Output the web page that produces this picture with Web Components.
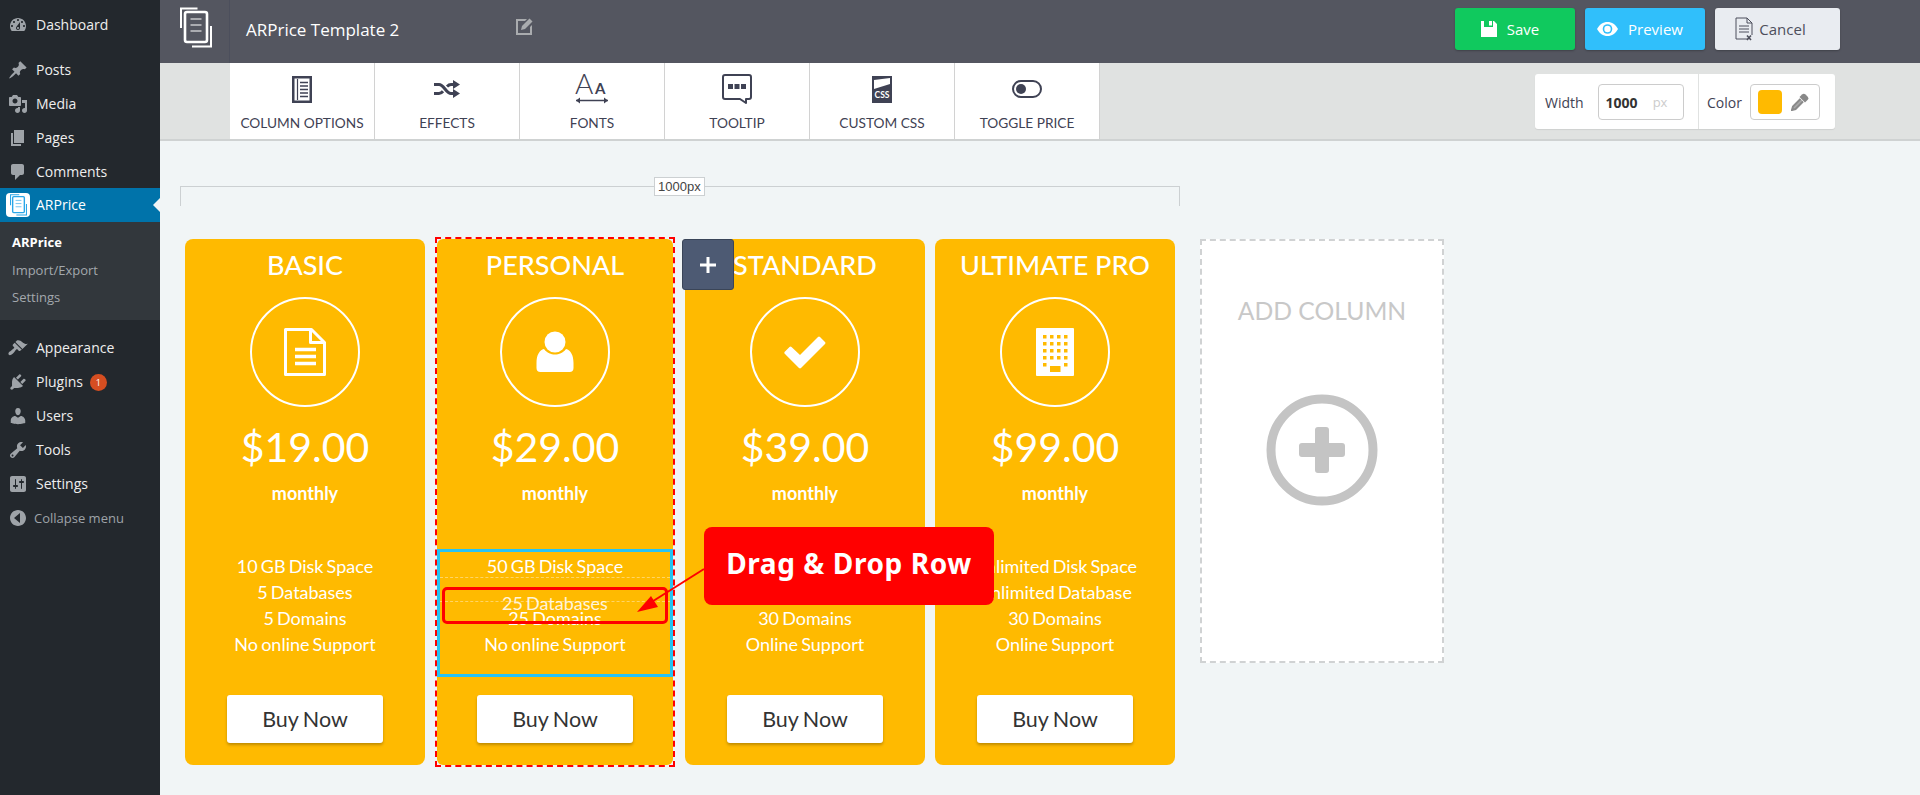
<!DOCTYPE html>
<html lang="en">
<head>
<meta charset="utf-8">
<title>ARPrice Template 2</title>
<style>
  html, body { margin: 0; padding: 0; height: 795px; overflow: hidden; background: #f1f5f6; }
  body { font-family: "Open Sans", "Noto Sans", sans-serif; }
  svg { display: block; }
</style>
</head>
<body>
<app-shell>
  <wp-sidebar slot="side">
    <wp-item icon="dashboard">Dashboard</wp-item>
    <wp-item icon="post" gap="top">Posts</wp-item>
    <wp-item icon="media">Media</wp-item>
    <wp-item icon="page">Pages</wp-item>
    <wp-item icon="comment">Comments</wp-item>
    <wp-item icon="arprice" current>ARPrice</wp-item>
    <wp-submenu>
      <wp-subitem current>ARPrice</wp-subitem>
      <wp-subitem>Import/Export</wp-subitem>
      <wp-subitem>Settings</wp-subitem>
    </wp-submenu>
    <wp-item icon="appearance" gap="sep">Appearance</wp-item>
    <wp-item icon="plugin" badge="1">Plugins</wp-item>
    <wp-item icon="user">Users</wp-item>
    <wp-item icon="tool">Tools</wp-item>
    <wp-item icon="settings">Settings</wp-item>
    <wp-item icon="collapse" dim>Collapse menu</wp-item>
  </wp-sidebar>

  <editor-header slot="top" heading="ARPrice Template 2"></editor-header>

  <editor-toolbar slot="top">
    <tool-tab label="COLUMN OPTIONS">
      <svg width="20" height="27" viewBox="0 0 20 27" fill="none" stroke="#3f4254"><rect x="1.250" y="1.250" width="17.500" height="24.500" stroke-width="2.500"/><path d="M5.500 3v21" stroke-width="1.200"/><path d="M8 6.500h8M8 10h8M8 13.500h8M8 17h8M8 20.500h8" stroke-width="1.500"/></svg>
    </tool-tab>
    <tool-tab label="EFFECTS">
      <svg width="26" height="18" viewBox="0 0 26 18" fill="none" stroke="#3f4254" stroke-width="3"><path d="M0 4.500h5c5 0 7 9 12 9h3M0 13.500h5c1.800 0 3-1 4-2.200M13 6.500c1-1 2.200-2 4-2h3"/><path d="M19 0l7 4.500-7 4.500zM19 9l7 4.500-7 4.500z" fill="#3f4254" stroke="none"/></svg>
    </tool-tab>
    <tool-tab label="FONTS">
      <svg width="34" height="31" viewBox="0 0 34 31" style="overflow:visible"><text x="0" y="20" font-family="Lato" font-size="28" font-weight="300" fill="#3f4254">A</text><text x="20" y="20" font-family="Lato" font-size="15" font-weight="700" fill="#3f4254">A</text><path d="M1 26.500h32" stroke="#3f4254" stroke-width="1.500"/><path d="M1 26.500l4-3v6zM33 26.500l-4-3v6z" fill="#3f4254"/></svg>
    </tool-tab>
    <tool-tab label="TOOLTIP">
      <svg width="30" height="30" viewBox="0 0 30 30" fill="none"><path d="M3 1h24a2 2 0 0 1 2 2v20a2 2 0 0 1-2 2h-3v4l-6-4H3a2 2 0 0 1-2-2V3a2 2 0 0 1 2-2z" stroke="#3f4254" stroke-width="2" stroke-linejoin="round"/><path d="M6 10h5v5H6zM12.500 10h5v5h-5zM19 10h5v5h-5z" fill="#3f4254"/></svg>
    </tool-tab>
    <tool-tab label="CUSTOM CSS">
      <svg width="20" height="27" viewBox="0 0 20 27" style="overflow:visible"><rect width="20" height="27" fill="#3f4254"/><path d="M2 13V4l16-2v6z" fill="#fff"/><text x="10" y="21.500" text-anchor="middle" font-family="Lato" font-size="8.500" font-weight="700" fill="#fff">CSS</text></svg>
    </tool-tab>
    <tool-tab label="TOGGLE PRICE">
      <svg width="30" height="18" viewBox="0 0 30 18" fill="none"><rect x="1" y="1" width="28" height="16" rx="8" stroke="#3f4254" stroke-width="2"/><circle cx="9" cy="9" r="5" fill="#3f4254"/></svg>
    </tool-tab>
    <size-panel slot="end"></size-panel>
  </editor-toolbar>

  <editor-canvas slot="main">
    <width-ruler label="1000px"></width-ruler>
    <card-row>
      <price-card name="BASIC" price="$19.00">
        <svg slot="icon" width="42" height="48" viewBox="0 0 42 48" fill="none" stroke="#fff" stroke-width="3" stroke-linejoin="round"><path d="M1.500 1.500h26l13 13v32h-39z"/><path d="M26.500 1.500v13h14"/><path d="M11 21.500h21M11 28.500h21M11 35.500h21" stroke-width="3.500"/></svg>
        <feature-row>10 GB Disk Space</feature-row>
        <feature-row>5 Databases</feature-row>
        <feature-row>5 Domains</feature-row>
        <feature-row>No online Support</feature-row>
      </price-card>
      <price-card name="PERSONAL" price="$29.00" selected>
        <svg slot="icon" width="38" height="42" viewBox="0 0 38 42" fill="#fff"><circle cx="19" cy="11" r="10.500"/><path d="M8 18c3 4 7 5.500 11 5.500S27 22 30 18c4.500 1 7.500 6 7.500 14v5a4 4 0 0 1-4 4h-29a4 4 0 0 1-4-4v-5C.5 24 3.500 19 8 18z"/></svg>
        <feature-row>50 GB Disk Space</feature-row>
        <feature-row placeholder>25 Databases</feature-row>
        <feature-row>25 Domains</feature-row>
        <feature-row>No online Support</feature-row>
      </price-card>
      <price-card name="STANDARD" price="$39.00">
        <svg slot="icon" width="42" height="33" viewBox="0 0 42 33" fill="#fff"><path d="M1 15.500l4.500-4.500a1.500 1.500 0 0 1 2 0l8.500 8L34 1a1.500 1.500 0 0 1 2 0l5 5a1.500 1.500 0 0 1 0 2L17 32a1.500 1.500 0 0 1-2 0L1 18a1.500 1.500 0 0 1 0-2.500z"/></svg>
        <feature-row></feature-row>
        <feature-row></feature-row>
        <feature-row>30 Domains</feature-row>
        <feature-row>Online Support</feature-row>
      </price-card>
      <price-card name="ULTIMATE PRO" price="$99.00">
        <svg slot="icon" width="38" height="48" viewBox="0 0 38 48"><rect width="38" height="48" rx="1" fill="#fff"/><g fill="#ffba00"><path d="M7 7h3.500v3.500H7zM14 7h3.500v3.500H14zM21 7h3.500v3.500H21zM28 7h3.500v3.500H28zM7 14h3.500v3.500H7zM14 14h3.500v3.500H14zM21 14h3.500v3.500H21zM28 14h3.500v3.500H28zM7 21h3.500v3.500H7zM14 21h3.500v3.500H14zM21 21h3.500v3.500H21zM28 21h3.500v3.500H28zM7 28h3.500v3.500H7zM14 28h3.500v3.500H14zM21 28h3.500v3.500H21zM28 28h3.500v3.500H28zM7 35h3.500v3.500H7zM28 35h3.500v3.500H28zM14 38h10.500v6H14z"/></g></svg>
        <feature-row>Unlimited Disk Space</feature-row>
        <feature-row>Unlimited Database</feature-row>
        <feature-row>30 Domains</feature-row>
        <feature-row>Online Support</feature-row>
      </price-card>
      <add-column></add-column>
    </card-row>
    <add-row-button></add-row-button>
    <drag-callout>Drag &amp; Drop Row</drag-callout>
  </editor-canvas>
</app-shell>

<script>
const ICONS = {
  dashboard: "M3.76 16h12.48c1.1-1.37 1.76-3.11 1.76-5 0-4.42-3.58-8-8-8s-8 3.58-8 8c0 1.89.66 3.63 1.76 5zM10 4c.55 0 1 .45 1 1s-.45 1-1 1-1-.45-1-1 .45-1 1-1zM6 6c.55 0 1 .45 1 1s-.45 1-1 1-1-.45-1-1 .45-1 1-1zm8 0c.55 0 1 .45 1 1s-.45 1-1 1-1-.45-1-1 .45-1 1-1zm-5.37 5.55L12 7v6c0 1.1-.9 2-2 2s-2-.9-2-2c0-.57.24-1.08.63-1.45zM4 10c.55 0 1 .45 1 1s-.45 1-1 1-1-.45-1-1 .45-1 1-1zm12 0c.55 0 1 .45 1 1s-.45 1-1 1-1-.45-1-1 .45-1 1-1zm-5 3c0-.55-.45-1-1-1s-1 .45-1 1 .45 1 1 1 1-.45 1-1z",
  post: "M10.44 3.02l1.82-1.82 6.36 6.35-1.83 1.82c-1.05-.68-2.48-.57-3.41.36l-.75.75c-.92.93-1.04 2.35-.35 3.41l-1.83 1.82-2.41-2.41-2.8 2.79c-.42.42-3.38 2.71-3.8 2.29s1.86-3.39 2.28-3.81l2.79-2.79L4.1 9.36l1.83-1.82c1.05.69 2.48.57 3.4-.36l.75-.75c.93-.92 1.05-2.35.36-3.41z",
  media: "M13 11V4c0-.55-.45-1-1-1h-1.67L9 1H5L3.67 3H2c-.55 0-1 .45-1 1v7c0 .55.45 1 1 1h10c.55 0 1-.45 1-1zM7 4.5c1.38 0 2.5 1.12 2.5 2.5S8.38 9.5 7 9.5 4.5 8.38 4.5 7 5.62 4.5 7 4.5zM14 6h5v10.5c0 1.38-1.12 2.5-2.5 2.5S14 17.88 14 16.5s1.12-2.5 2.5-2.5c.17 0 .34.02.5.05V9h-3V6zm-4 8.05V13h2v3.5c0 1.38-1.12 2.5-2.5 2.5S7 17.88 7 16.5 8.12 14 9.5 14c.17 0 .34.02.5.05z",
  page: "M6 15V2h10v13H6zm-1 1h8v2H3V5h2v11z",
  comment: "M5 2h9c1.1 0 2 .9 2 2v7c0 1.1-.9 2-2 2h-2l-5 5v-5H5c-1.1 0-2-.9-2-2V4c0-1.1.9-2 2-2z",
  appearance: "M14.48 11.06L7.41 3.99l1.5-1.5c.5-.56 2.3-.47 3.51.32 1.21.8 1.43 1.28 2.91 2.1 1.18.64 2.45 1.26 4.45.85zm-.71.71L6.7 4.7 4.93 6.47c-.39.39-.39 1.02 0 1.41l1.06 1.06c.39.39.39 1.03 0 1.42-.6.6-1.43 1.11-2.21 1.69-.35.26-.7.53-1.01.84C1.43 13.23.4 14.57.4 15.8c0 .29.15.63.44.93.29.3.63.44.93.44 1.22 0 2.57-1.03 3.91-2.36.31-.31.58-.66.84-1.01.57-.78 1.08-1.61 1.69-2.21.39-.39 1.02-.39 1.41 0l1.06 1.06c.39.39 1.02.39 1.41 0z",
  plugin: "M13.11 4.36L9.87 7.6 8 5.73l3.24-3.24c.35-.34 1.05-.2 1.56.32.52.51.66 1.21.31 1.55zm-8 1.77l.91-1.12 9.01 9.01-1.19.84c-.71.71-2.63 1.16-3.82 1.16H6.14L4.9 17.26c-.59.59-1.54.59-2.12 0-.59-.58-.59-1.53 0-2.12l1.24-1.24v-3.88c0-1.13.4-3.19 1.09-3.89zm7.26 3.97l3.24-3.24c.34-.35 1.04-.21 1.55.31.52.51.66 1.21.31 1.55l-3.24 3.25z",
  user: "M10 9.25c-2.27 0-2.73-3.44-2.73-3.44C7 4.02 7.82 2 9.97 2c2.16 0 2.98 2.02 2.71 3.81 0 0-.41 3.44-2.68 3.44zm0 2.57L12.72 10c2.39 0 4.52 2.33 4.52 4.53v2.49s-3.65 1.13-7.24 1.13c-3.65 0-7.24-1.13-7.24-1.13v-2.49c0-2.25 1.94-4.48 4.47-4.48z",
  tool: "M16.68 9.77c-1.34 1.34-3.3 1.67-4.95.99l-5.41 6.52c-.99.99-2.59.99-3.58 0s-.99-2.59 0-3.57l6.52-5.42c-.68-1.65-.35-3.61.99-4.95 1.28-1.28 3.12-1.62 4.72-1.06l-2.89 2.89 2.82 2.82 2.86-2.87c.53 1.58.18 3.39-1.08 4.65zM3.81 16.21c.4.39 1.04.39 1.43 0 .4-.4.4-1.04 0-1.43-.39-.4-1.03-.4-1.43 0-.39.39-.39 1.03 0 1.43z",
  settings: "M18 16V4c0-1.1-.9-2-2-2H4c-1.1 0-2 .9-2 2v12c0 1.1.9 2 2 2h12c1.1 0 2-.9 2-2zM8 11h1c.55 0 1 .45 1 1s-.45 1-1 1H8v1.5c0 .28-.22.5-.5.5s-.5-.22-.5-.5V13H6c-.55 0-1-.45-1-1s.45-1 1-1h1V5.5c0-.28.22-.5.5-.5s.5.22.5.5V11zm5-2h-1c-.55 0-1-.45-1-1s.45-1 1-1h1V5.5c0-.28.22-.5.5-.5s.5.22.5.5V7h1c.55 0 1 .45 1 1s-.45 1-1 1h-1v5.5c0 .28-.22.5-.5.5s-.5-.22-.5-.5V9z",
  collapse: "M18 10c0-4.42-3.58-8-8-8s-8 3.58-8 8 3.58 8 8 8 8-3.58 8-8zm-6 5l-6-5 6-5v10z"
};

// stacked document logo, used big in the header and small in the menu
function logoSvg(size, color) {
  return `<svg width="${size}" height="${size * 41 / 32}" viewBox="0 0 32 41" fill="none" stroke="${color}" stroke-width="2">
    <rect x="5" y="5" width="22" height="30" rx="2" stroke-width="2.600"/>
    <path d="M1 21V1.500h16.500M31 19v20.500H12"/>
    <path d="M10.500 12h11M10.500 18h11M10.500 24h11" stroke-width="1.200"/>
  </svg>`;
}

class AppShell extends HTMLElement {
  constructor() {
    super();
    this.attachShadow({ mode: "open" });
    this.shadowRoot.innerHTML = `
      <style>
        :host { display: grid; grid-template-columns: 160px 1fr; grid-template-rows: auto 1fr; height: 795px; overflow: hidden; }
        .side { grid-row: 1 / 3; display: block; }
        .top { display: block; }
      </style>
      <div class="side"><slot name="side"></slot></div>
      <div class="top"><slot name="top"></slot></div>
      <div><slot name="main"></slot></div>`;
  }
}
customElements.define("app-shell", AppShell);

class WpSidebar extends HTMLElement {
  constructor() {
    super();
    this.attachShadow({ mode: "open" });
    this.shadowRoot.innerHTML = `
      <style>
        :host { display: block; box-sizing: border-box; height: 795px; padding-top: 8px; background: #23282d; font: 13px/18px "Open Sans", sans-serif; }
      </style>
      <slot></slot>`;
  }
}
customElements.define("wp-sidebar", WpSidebar);

class WpItem extends HTMLElement {
  constructor() {
    super();
    this.attachShadow({ mode: "open" });
  }
  connectedCallback() {
    const name = this.getAttribute("icon");
    const badge = this.getAttribute("badge");
    const icon = name === "arprice"
      ? `<span class="logo">${logoSvg(17, "#2aa6e8")}</span>`
      : `<svg width="20" height="20" viewBox="0 0 20 20" fill="#9ea3a8"><path d="${ICONS[name]}"/></svg>`;
    this.shadowRoot.innerHTML = `
      <style>
        :host { display: flex; align-items: center; height: 34px; padding-left: 8px; color: #eee; font-size: 14px; }
        :host([gap="top"]) { margin-top: 11px; }
        :host([gap="sep"]) { margin-top: 11px; }
        :host([current]) { background: #0073aa; color: #fff; position: relative; margin-top: -1px; padding-left: 6px; }
        :host([current])::after { content: ""; position: absolute; right: 0; top: 10px; border: 7px solid transparent; border-right-color: #f1f5f6; border-left-width: 0; }
        :host([dim]) { color: #9ea3a8; font-size: 13px; }
        .label { margin-left: 8px; }
        :host([current]) .label { margin-left: 6px; }
        :host([dim]) .label { margin-left: 6px; }
        .logo { width: 24px; height: 24px; background: #fff; border-radius: 4px; display: flex; align-items: center; justify-content: center; }
        .badge { margin-left: 7px; width: 17px; height: 17px; border-radius: 50%; background: #d54e21; color: #fff; font-size: 9px; line-height: 17px; text-align: center; }
      </style>
      ${icon}<span class="label"><slot></slot></span>${badge ? `<span class="badge">${badge}</span>` : ""}`;
  }
}
customElements.define("wp-item", WpItem);

class WpSubmenu extends HTMLElement {
  constructor() {
    super();
    this.attachShadow({ mode: "open" });
    this.shadowRoot.innerHTML = `
      <style>
        :host { display: block; background: #32373c; padding: 7px 0 8px; height: 83px; }
      </style>
      <slot></slot>`;
  }
}
customElements.define("wp-submenu", WpSubmenu);

class WpSubitem extends HTMLElement {
  constructor() {
    super();
    this.attachShadow({ mode: "open" });
    this.shadowRoot.innerHTML = `
      <style>
        :host { display: block; height: 27.500px; line-height: 27px; padding-left: 12px; font-size: 13px; color: #a3a8ad; }
        :host([current]) { color: #fff; font-weight: 700; }
      </style>
      <slot></slot>`;
  }
}
customElements.define("wp-subitem", WpSubitem);

class EditorHeader extends HTMLElement {
  constructor() {
    super();
    this.attachShadow({ mode: "open" });
  }
  static get observedAttributes() {
    return ["heading"];
  }
  attributeChangedCallback(attr, oldVal, newVal) {
    if (attr === "heading") {
      this.heading = newVal;
    }
  }
  connectedCallback() {
    this.shadowRoot.innerHTML = `
      <style>
        :host { display: flex; align-items: center; height: 63px; background: #545660; color: #fff; }
        .logo { width: 70px; height: 63px; box-sizing: border-box; padding: 7px 0 0 20px; border-right: 1px solid #4c4f5c; }
        h1 { margin: 0 0 4px 16px; width: 268px; font: 400 17px "Open Sans", sans-serif; white-space: nowrap; }
        .edit { margin-bottom: 10px; }
        .actions { margin: 0 80px 5px auto; display: flex; gap: 10px; }
        a { display: flex; align-items: center; justify-content: center; gap: 10px; width: 120px; height: 42px; box-sizing: border-box; padding-right: 10px; border-radius: 3px; font-size: 15px; color: #fff; box-shadow: 0 1px 2px rgba(0,0,0,.25); }
        .save { background: #10c95e; }
        .preview { background: #30bffb; }
        .cancel { background: #e9ecf1; color: #4d4f5c; width: 125px; gap: 6px; padding-right: 14px; }
      </style>
      <div class="logo">${logoSvg(32, "#fff")}</div>
      <h1>${this.heading}</h1>
      <svg class="edit" width="20" height="20" viewBox="0 0 20 20" fill="#a9abae"><path d="M2 2h11l-2 2H4v12h12V10l2-2v10H2z"/><path d="M8 9l7.500-7.500 3 3L11 12l-4 1z"/></svg>
      <div class="actions">
        <a class="save"><svg width="16" height="18" viewBox="0 0 16 18" fill="#fff"><path d="M0 1h3v6h9V1h1l3 3v13H0z"/><path d="M8 1h3v4.500H8z"/></svg>Save</a>
        <a class="preview"><svg width="21" height="14" viewBox="0 0 21 14"><path d="M0 7c2.500-4.500 6-7 10.500-7S18.500 2.500 21 7c-2.500 4.500-6 7-10.500 7S2.500 11.500 0 7z" fill="#fff"/><circle cx="10.500" cy="7" r="4.800" fill="#30bffb"/><circle cx="10.500" cy="7" r="3.200" fill="#fff"/></svg>Preview</a>
        <a class="cancel"><svg width="18" height="24" viewBox="0 0 18 24" fill="none" stroke="#4d4f5c"><path d="M13 22H1V1h11l5 5v12M12 1v5h5" stroke-width="1"/><path d="M4 9h10M4 12h10M4 15h10" stroke-width="1"/><path d="M12 18.500l4 4.500M16 18.500l-4 4.500" stroke-width="1.600"/></svg>Cancel</a>
      </div>`;
  }
}
customElements.define("editor-header", EditorHeader);

class EditorToolbar extends HTMLElement {
  constructor() {
    super();
    this.attachShadow({ mode: "open" });
    this.shadowRoot.innerHTML = `
      <style>
        :host { display: flex; height: 76px; padding-left: 70px; background: #e0e2e1; border-bottom: 2px solid #cfd2d2; }
        .tabs { display: flex; }
        .end { margin-left: 435px; }
      </style>
      <div class="tabs"><slot></slot></div>
      <div class="end"><slot name="end"></slot></div>`;
  }
}
customElements.define("editor-toolbar", EditorToolbar);

class ToolTab extends HTMLElement {
  constructor() {
    super();
    this.attachShadow({ mode: "open" });
  }
  connectedCallback() {
    this.shadowRoot.innerHTML = `
      <style>
        :host { display: block; width: 145px; height: 76px; box-sizing: border-box; background: #fff; border-right: 1px solid #d2d2d2; color: #3f4254; font: 13.700px "Lato", sans-serif; }
        .icon { height: 50px; display: flex; align-items: center; justify-content: center; padding-top: 2px; box-sizing: border-box; }
        .text { text-align: center; line-height: 20px; }
      </style>
      <div class="icon"><slot></slot></div>
      <div class="text">${this.getAttribute("label")}</div>`;
  }
}
customElements.define("tool-tab", ToolTab);

class SizePanel extends HTMLElement {
  constructor() {
    super();
    this.attachShadow({ mode: "open" });
    this.shadowRoot.innerHTML = `
      <style>
        :host { display: flex; margin-top: 11px; width: 300px; height: 55px; background: #fff; border-radius: 3px; box-shadow: 0 1px 1px rgba(0,0,0,.08); font: 14px "Open Sans", sans-serif; color: #3f4254; }
        .part { display: flex; align-items: center; box-sizing: border-box; padding-top: 2px; }
        .width { width: 164px; padding-left: 10px; border-right: 1px solid #e0e2e1; }
        .color { padding-left: 8px; }
        .field { display: flex; align-items: center; box-sizing: border-box; height: 36px; margin-top: -1px; border: 1px solid #ccc; border-radius: 4px; }
        .num { width: 86px; margin-left: 14px; padding-left: 7px; gap: 15px; }
        .num b { color: #333; font-size: 14px; }
        .num span { color: #ccc; font-size: 13px; }
        .pick { width: 70px; margin-left: 8px; padding-left: 7px; gap: 9px; }
        .swatch { width: 24px; height: 24px; border-radius: 4px; background: #ffba00; }
      </style>
      <div class="part width">Width<div class="field num"><b>1000</b><span>px</span></div></div>
      <div class="part color">Color<div class="field pick"><div class="swatch"></div>
        <svg width="18" height="18" viewBox="0 0 18 18"><path d="M11 1.500a2.500 2.500 0 0 1 3.500 0l2 2a2.500 2.500 0 0 1 0 3.500L14 9.500 8.500 4z" fill="#888"/><path d="M9.500 6L2 13.500 1 17l3.500-1L12 8.500" fill="#aaa" stroke="#8a8a8a" stroke-width="2"/></svg>
      </div></div>`;
  }
}
customElements.define("size-panel", SizePanel);

class EditorCanvas extends HTMLElement {
  constructor() {
    super();
    this.attachShadow({ mode: "open" });
    this.shadowRoot.innerHTML = `
      <style>
        :host { display: block; position: relative; padding: 45px 0 0 20px; background: #f1f5f6; height: 654px; box-sizing: border-box; }
      </style>
      <slot></slot>`;
  }
}
customElements.define("editor-canvas", EditorCanvas);

class WidthRuler extends HTMLElement {
  constructor() {
    super();
    this.attachShadow({ mode: "open" });
  }
  connectedCallback() {
    this.shadowRoot.innerHTML = `
      <style>
        :host { display: block; position: relative; width: 1000px; height: 20px; box-sizing: border-box; border: 1px solid #ccd0d2; border-bottom: 0; }
        span { position: absolute; left: 473px; top: -10px; height: 19px; padding: 0 3px; box-sizing: border-box; background: #fff; border: 1px solid #ccd0d2; font: 13px/17px "Liberation Sans", sans-serif; color: #444; }
      </style>
      <span>${this.getAttribute("label")}</span>`;
  }
}
customElements.define("width-ruler", WidthRuler);

class CardRow extends HTMLElement {
  constructor() {
    super();
    this.attachShadow({ mode: "open" });
    this.shadowRoot.innerHTML = `
      <style>
        :host { display: flex; align-items: flex-start; gap: 10px; margin: 33px 0 0 5px; }
      </style>
      <slot></slot>`;
  }
}
customElements.define("card-row", CardRow);

class PriceCard extends HTMLElement {
  constructor() {
    super();
    this.attachShadow({ mode: "open" });
  }
  connectedCallback() {
    this.shadowRoot.innerHTML = `
      <style>
        :host { display: block; position: relative; width: 240px; height: 526px; background: #ffba00; border-radius: 8px; color: #fff; text-align: center; font-family: "Lato", sans-serif; }
        :host([selected]) { width: 236px; margin: 0 2px; border-radius: 6px; }
        :host([selected])::after { content: ""; position: absolute; inset: -2px -2px -2px -2px; border: 2px dashed #f00; pointer-events: none; }
        h2 { margin: 0; font-size: 27px; font-weight: 500; line-height: 52px; white-space: nowrap; }
        .circle { width: 110px; height: 110px; box-sizing: border-box; margin: 6px auto 0; border: 2px solid #fff; border-radius: 50%; display: flex; align-items: center; justify-content: center; }
        .price { margin-top: 10px; font-size: 41px; line-height: 60px; }
        .period { margin-top: 4px; font-size: 18px; font-weight: 700; line-height: 24px; }
        .rows { box-sizing: border-box; height: 128px; margin-top: 44px; padding-top: 4px; }
        :host([selected]) .rows { outline: 3px solid #27c3f3; outline-offset: -3px; }
        .buy { width: 156px; height: 48px; margin: 18px auto 0; background: #fff; color: #333; border-radius: 3px; font-size: 21.500px; word-spacing: -1px; line-height: 48px; box-shadow: 0 2px 3px rgba(0,0,0,.25); }
      </style>
      <h2>${this.getAttribute("name")}</h2>
      <div class="circle"><slot name="icon"></slot></div>
      <div class="price">${this.getAttribute("price")}</div>
      <div class="period">monthly</div>
      <div class="rows"><slot></slot></div>
      <div class="buy">Buy Now</div>`;
  }
}
customElements.define("price-card", PriceCard);

class FeatureRow extends HTMLElement {
  constructor() {
    super();
    this.attachShadow({ mode: "open" });
    this.shadowRoot.innerHTML = `
      <style>
        :host { display: block; height: 26px; line-height: 26px; font-size: 18px; word-spacing: -1.500px; white-space: nowrap; }
        :host([placeholder]) { height: 25px; box-sizing: border-box; margin: -2px 3px 3px; border: 1px dashed rgba(255,255,255,.4); border-width: 1px 0; line-height: 23px; }
        :host([placeholder]) span { position: relative; top: 14px; opacity: .85; }
      </style>
      <span><slot></slot></span>`;
  }
}
customElements.define("feature-row", FeatureRow);

class AddColumn extends HTMLElement {
  constructor() {
    super();
    this.attachShadow({ mode: "open" });
    this.shadowRoot.innerHTML = `
      <style>
        :host { display: block; width: 244px; height: 424px; box-sizing: border-box; margin-left: 15px; background: #fff; border: 2px dashed #d0d2d3; text-align: center; color: #c8c8c8; font: 24.700px/32px "Lato", sans-serif; padding-top: 54px; }
        svg { margin: 67px auto 0; }
      </style>
      <div>ADD COLUMN</div>
      <svg width="112" height="112" viewBox="0 0 112 112"><circle cx="56" cy="56" r="51" fill="none" stroke="#c4c4c4" stroke-width="9"/><path d="M49 36a3 3 0 0 1 3-3h8a3 3 0 0 1 3 3v13h13a3 3 0 0 1 3 3v8a3 3 0 0 1-3 3H63v13a3 3 0 0 1-3 3h-8a3 3 0 0 1-3-3V63H36a3 3 0 0 1-3-3v-8a3 3 0 0 1 3-3h13z" fill="#c4c4c4"/></svg>`;
  }
}
customElements.define("add-column", AddColumn);

class AddRowButton extends HTMLElement {
  constructor() {
    super();
    this.attachShadow({ mode: "open" });
    this.shadowRoot.innerHTML = `
      <style>
        :host { position: absolute; left: 522px; top: 98px; width: 52px; height: 51px; box-sizing: border-box; background: #4d5a73; border: 1px solid #3a4558; border-radius: 3px; display: flex; align-items: center; justify-content: center; }
      </style>
      <svg width="16" height="16" viewBox="0 0 16 16" fill="#fff"><path d="M6.500 0h3v6.500H16v3H9.500V16h-3V9.500H0v-3h6.500z"/></svg>`;
  }
}
customElements.define("add-row-button", AddRowButton);

class DragCallout extends HTMLElement {
  constructor() {
    super();
    this.attachShadow({ mode: "open" });
    this.shadowRoot.innerHTML = `
      <style>
        :host { position: absolute; left: 0; top: 0; width: 0; height: 0; }
        .box { position: absolute; left: 282px; top: 446px; width: 226px; height: 37px; box-sizing: border-box; border: 3px solid #f00; border-radius: 5px; }
        .label { position: absolute; left: 544px; top: 386px; width: 290px; height: 78px; background: #f00; border-radius: 8px; color: #fff; font: 700 28px/72px "Noto Sans", sans-serif; letter-spacing: .6px; text-align: center; white-space: nowrap; }
        svg { position: absolute; left: 470px; top: 420px; overflow: visible; }
      </style>
      <div class="box"></div>
      <svg width="80" height="60" viewBox="0 0 80 60" fill="#f00"><path d="M74 8L20 42" stroke="#f00" stroke-width="2"/><path d="M7 51l14-16 7 11z"/></svg>
      <div class="label"><slot></slot></div>`;
  }
}
customElements.define("drag-callout", DragCallout);
</script>
</body>
</html>
